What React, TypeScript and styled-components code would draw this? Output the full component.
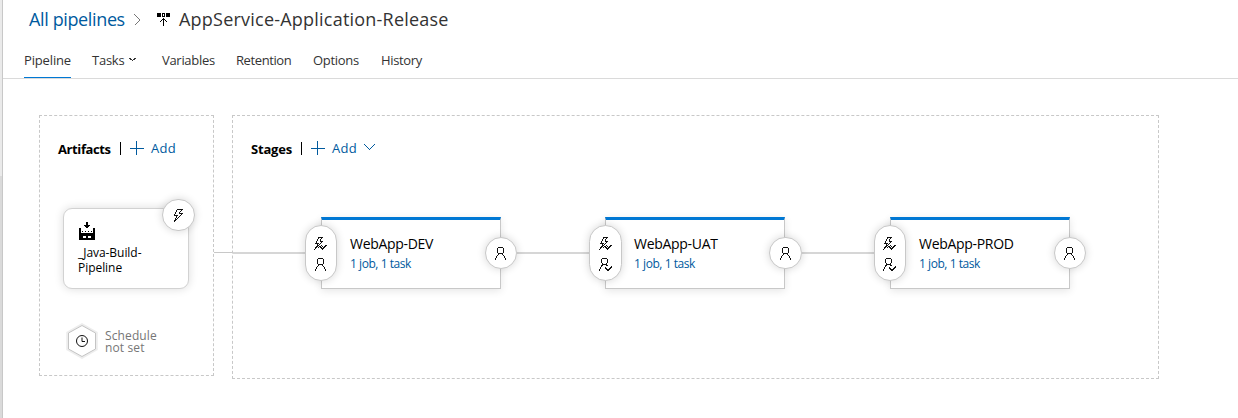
import React from "react";
import styled, { createGlobalStyle } from "styled-components";

const Global = createGlobalStyle`
  * { box-sizing: border-box; }
  body { margin: 0; background: #fff; font-family: "Open Sans", "Noto Sans", sans-serif; color: #333; }
  svg { display: block; flex: none; shape-rendering: crispEdges; }
`;

const Page = styled.div`
  display: flex;
  width: 1238px;
  height: 418px;
  overflow: hidden;
`;
const Rail = styled.div`
  flex: none;
  width: 3px;
  border-right: 1px solid #c8c8c8;
  background: linear-gradient(#eaeaea 176px, #dadada 176px);
`;
const Main = styled.main`
  flex: 1;
  display: flex;
  flex-direction: column;
`;
const Breadcrumb = styled.header`
  display: flex;
  align-items: center;
  height: 40px;
  padding-left: 26px;
`;
const Text = styled.span<{ $size: number; $line: number; $track?: number; $color?: string; $weight?: number }>`
  font-size: ${(p) => p.$size}px;
  line-height: ${(p) => p.$line}px;
  letter-spacing: ${(p) => p.$track ?? 0}px;
  color: ${(p) => p.$color ?? "#333"};
  font-weight: ${(p) => p.$weight ?? 400};
  white-space: pre-line;
`;
const CrumbLink = styled.div`
  width: 105px;
  margin-top: -2px;
  white-space: nowrap;
`;
const CrumbTitle = styled.div`
  margin-top: -2px;
  white-space: nowrap;
`;
const CrumbIcon = styled.div`
  margin: -1px 9px 0 16px;
`;
const Tabs = styled.nav`
  display: flex;
  gap: 21px;
  height: 39px;
  padding-left: 21px;
  border-bottom: 1px solid #dadada;
`;
const Tab = styled.div<{ $w: number; $active?: boolean }>`
  display: flex;
  align-items: center;
  gap: 5px;
  width: ${(p) => p.$w}px;
  padding-top: 2px;
  padding-bottom: ${(p) => (p.$active ? 0 : 1)}px;
  border-bottom: ${(p) => (p.$active ? "1px solid #0078d4" : "none")};
  white-space: nowrap;
`;
const Canvas = styled.div`
  display: flex;
  align-items: flex-start;
  padding: 36px 0 0 36px;
`;
const Panel = styled.section<{ $w: number; $h: number }>`
  width: ${(p) => p.$w}px;
  height: ${(p) => p.$h}px;
  border: 1px dashed #c8c8c8;
`;
const PanelHead = styled.div`
  display: flex;
  align-items: center;
  height: 64px;
  padding-left: 18px;
`;
const HeadTitle = styled.div<{ $w: number }>`
  width: ${(p) => p.$w}px;
`;
const Divider = styled.div`
  width: 1px;
  height: 13px;
  margin-right: 9px;
  background: #000;
`;
const AddButton = styled.div`
  display: flex;
  align-items: center;
  gap: 7px;
`;
const AddChevron = styled.svg`
  margin-top: -2px;
`;
const PanelLink = styled.div`
  width: 18px;
  height: 1px;
  margin-top: 137px;
  background: #c8c8c8;
`;
const ArtifactCard = styled.div`
  position: relative;
  width: 126px;
  height: 81px;
  margin: 28px 0 0 23px;
  padding: 13px 0 0 14px;
  border: 1px solid #d2d2d2;
  border-radius: 9px;
  background: #fff;
  box-shadow: 0 0 10px rgba(0, 0, 0, 0.14);
`;
const BuildIcon = styled.svg`
  margin-left: 1px;
`;
const ArtifactName = styled.div`
  display: flex;
  margin-top: 5px;
`;
const Bubble = styled.div<{ $h?: number; $w?: number }>`
  display: flex;
  flex-direction: column;
  align-items: center;
  justify-content: center;
  gap: 8px;
  width: ${(p) => p.$w ?? 32}px;
  height: ${(p) => p.$h ?? 32}px;
  padding-right: ${(p) => (p.$h && p.$w === 33 ? 0 : 1)}px;
  padding-top: ${(p) => (p.$h ? 2 : 0)}px;
  border: 1px solid #c8c8c8;
  border-radius: 17px;
  background: #fff;
  box-shadow: 0 0 8px rgba(0, 0, 0, 0.16);
`;
const TriggerBadge = styled(Bubble)`
  position: absolute;
  top: -10px;
  left: 98px;
  padding-right: 0;
`;
const Schedule = styled.div`
  display: flex;
  align-items: center;
  margin: 33px 0 0 25px;
  gap: 6px;
`;
const ScheduleLabel = styled.div`
  display: flex;
  padding-top: 1px;
`;
const StageRow = styled.div`
  display: flex;
  align-items: center;
  height: 72px;
  margin-top: 37px;
`;
const Connector = styled.div<{ $w: number }>`
  width: ${(p) => p.$w}px;
  height: 2px;
  background: #d6d6d6;
`;
const Stage = styled.div`
  position: relative;
  display: flex;
  align-items: center;
  height: 72px;
  z-index: 1;
`;
const StageCard = styled.div<{ $overlap: number }>`
  flex: none;
  width: 180px;
  height: 72px;
  margin: 0 -16px 0 -${(p) => p.$overlap}px;
  padding: 14px 0 0 28px;
  border: 1px solid #c8c8c8;
  border-top: 3px solid #0078d4;
  background: #fff;
  box-shadow: 0 2px 8px rgba(0, 0, 0, 0.1);
  display: flex;
  flex-direction: column;
  gap: 1px;
`;
const FrontBubble = styled(Bubble)`
  position: relative;
  flex: none;
  z-index: 1;
`;

const LINK = "#005a9e";

const Plus = () => (
  <svg width="14" height="14" viewBox="0 0 14 14" fill={LINK}>
    <path d="M6 0h1v14h-1zM0 7h14v1H0z" />
  </svg>
);

/* Icons drawn on a 13px grid; each row lists [first column, length] runs. */
type Run = [number, number];
const toPath = (rows: Run[][]) =>
  rows.map((runs, y) => runs.map(([x, n]) => `M${x} ${y}h${n}v1h-${n}z`).join("")).join("");

const GridIcon = ({ rows }: { rows: Run[][] }) => (
  <svg width="13" height="13" viewBox="0 0 13 13" fill="#111">
    <path d={toPath(rows)} />
  </svg>
);

const BOLT: Run[][] = [
  [[5, 6]],
  [[4, 1], [9, 1]],
  [[4, 1], [8, 1]],
  [[3, 1], [7, 1]],
  [[3, 1], [7, 4]],
  [[2, 1], [9, 1]],
  [[2, 4], [8, 1]],
  [[4, 1], [7, 1]],
  [[4, 1], [6, 1]],
  [[3, 1], [5, 1]],
  [[3, 2]],
  [[2, 2]],
  [[2, 1]],
];
const BOLT_CHECK: Run[][] = [
  [[4, 5]],
  [[4, 1], [7, 1]],
  [[3, 1], [6, 1]],
  [[3, 1], [6, 1]],
  [[2, 1], [6, 3]],
  [[2, 1], [7, 1]],
  [[1, 4], [6, 1]],
  [[3, 1], [5, 1]],
  [[3, 2], [7, 1], [11, 2]],
  [[2, 2], [5, 2], [8, 1], [10, 2]],
  [[1, 2], [4, 1], [6, 2], [9, 2]],
  [[1, 1], [7, 3]],
  [[0, 1], [8, 1]],
];
const PERSON: Run[][] = [
  [[4, 5]],
  [[3, 1], [9, 1]],
  [[3, 1], [9, 1]],
  [[3, 1], [9, 1]],
  [[3, 1], [9, 1]],
  [[3, 1], [9, 1]],
  [[4, 5]],
  [[4, 1], [8, 1]],
  [[3, 1], [9, 1]],
  [[2, 1], [10, 1]],
  [[2, 1], [10, 1]],
  [[1, 1], [11, 1]],
  [[1, 1], [11, 1]],
];
const PERSON_CHECK: Run[][] = [
  [[3, 5]],
  [[2, 1], [8, 1]],
  [[2, 1], [8, 1]],
  [[2, 1], [8, 1]],
  [[2, 1], [8, 1]],
  [[3, 1], [7, 1]],
  [[3, 5]],
  [[2, 2], [7, 2]],
  [[2, 1], [12, 1]],
  [[1, 1], [6, 1], [11, 2]],
  [[1, 1], [6, 2], [10, 2]],
  [[0, 1], [7, 4]],
  [[0, 1], [8, 2]],
];

const tabs: { name: string; w: number; track: number }[] = [
  { name: "Pipeline", w: 47, track: -0.15 },
  { name: "Tasks", w: 49, track: -0.25 },
  { name: "Variables", w: 53, track: -0.3 },
  { name: "Retention", w: 56, track: -0.4 },
  { name: "Options", w: 47, track: -0.3 },
  { name: "History", w: 41, track: -0.35 },
];
const stages = [
  { name: "WebApp-DEV", start: 32, end: 32, approved: false },
  { name: "WebApp-UAT", start: 33, end: 33, approved: true },
  { name: "WebApp-PROD", start: 32, end: 32, approved: true },
];

export default function App() {
  return (
    <Page>
      <Global />
      <Rail />
      <Main>
        <Breadcrumb>
          <CrumbLink>
            <Text $size={18} $line={24} $track={-0.37} $color={LINK}>All pipelines</Text>
          </CrumbLink>
          <svg width="7" height="12" viewBox="0 0 7 12" fill="none" stroke="#767676">
            <path d="M.5 .5L6 6L.5 11.500" />
          </svg>
          <CrumbIcon>
            <svg width="13" height="13" viewBox="0 0 13 13" fill="#000">
              <path d="M0 0h4v4H0zM9 0h4v4H9zM5 0h3v4H5zM6 1v2h1V1z" fillRule="evenodd" />
              <path d="M6 5h1v8H6zM5 6h3v1H5zM4 7h1v1H4zM8 7h1v1H8zM3 8h1v1H3zM9 8h1v1H9z" />
            </svg>
          </CrumbIcon>
          <CrumbTitle>
            <Text $size={18} $line={24} $track={0.22}>AppService-Application-Release</Text>
          </CrumbTitle>
        </Breadcrumb>
        <Tabs>
          {tabs.map((t, i) => (
            <Tab key={t.name} $w={t.w} $active={i === 0}>
              <Text $size={13} $line={18} $track={t.track}>{t.name}</Text>
              {t.name === "Tasks" && (
                <svg width="7" height="3" viewBox="0 0 7 3" fill="#333">
                  <path d="M0 0h2v1H0zM5 0h2v1H5zM1 1h2v1H1zM4 1h2v1H4zM3 2h1v1H3z" />
                </svg>
              )}
            </Tab>
          ))}
        </Tabs>
        <Canvas>
          <Panel $w={175} $h={261}>
            <PanelHead>
              <HeadTitle $w={62}>
                <Text $size={13} $line={18} $track={-0.4} $color="#000" $weight={700}>Artifacts</Text>
              </HeadTitle>
              <Divider />
              <AddButton>
                <Plus />
                <Text $size={13} $line={18} $track={0.3} $color={LINK}>Add</Text>
              </AddButton>
            </PanelHead>
            <ArtifactCard>
              <BuildIcon width="16" height="18" viewBox="0 0 16 18" fill="#000">
                <path d="M7 0h2v4H7zM5 3h6v1H5zM6 4h4v1H6zM7 5h2v1H7z" />
                <path d="M0 6h2v5h12V6h2v12H0zM4 14v2h3v-2zM9 14v2h3v-2z" fillRule="evenodd" />
                <path d="M3 9h1v1H3zM6 9h1v1H6zM9 9h1v1H9zM12 9h1v1H12z" />
              </BuildIcon>
              <ArtifactName>
                <Text $size={12} $line={15} $track={-0.05} $color="#000">{"_Java-Build-\nPipeline"}</Text>
              </ArtifactName>
              <TriggerBadge $w={33}><GridIcon rows={BOLT} /></TriggerBadge>
            </ArtifactCard>
            <Schedule>
              <svg width="34" height="38" viewBox="0 0 34 38" fill="none" style={{ shapeRendering: "auto" }}>
                <path d="M17 3L31 11V27L17 35L3 27V11Z" stroke="#ededed" strokeWidth="3.500" />
                <path d="M17 3.500L30.500 11V27L17 34.500L3.500 27V11Z" fill="#fff" stroke="#c4c4c4" />
                <circle cx="17" cy="19" r="5.500" stroke="#111" />
                <path d="M17 15.500V19.500H20" stroke="#111" />
              </svg>
              <ScheduleLabel>
                <Text $size={12} $line={12} $track={0.12} $color="#767676">{"Schedule\nnot set"}</Text>
              </ScheduleLabel>
            </Schedule>
          </Panel>
          <PanelLink />
          <Panel $w={927} $h={264}>
            <PanelHead>
              <HeadTitle $w={50}>
                <Text $size={13} $line={18} $track={-0.2} $color="#000" $weight={700}>Stages</Text>
              </HeadTitle>
              <Divider />
              <AddButton>
                <Plus />
                <Text $size={13} $line={18} $track={0.3} $color={LINK}>Add</Text>
                <AddChevron width="11" height="6" viewBox="0 0 11 6" fill={LINK}>
                  <path d="M0 0h1v1H0zM1 1h1v1H1zM2 2h1v1H2zM3 3h1v1H3zM4 4h1v1H4zM5 5h1v1H5zM6 4h1v1H6zM7 3h1v1H7zM8 2h1v1H8zM9 1h1v1H9zM10 0h1v1H10z" />
                </AddChevron>
              </AddButton>
            </PanelHead>
            <StageRow>
              {stages.map((s) => (
                <React.Fragment key={s.name}>
                  <Connector $w={72} />
                  <Stage>
                    <FrontBubble $h={56} $w={s.start}>
                      <GridIcon rows={BOLT_CHECK} />
                      <GridIcon rows={s.approved ? PERSON_CHECK : PERSON} />
                    </FrontBubble>
                    <StageCard $overlap={s.start - 16}>
                      <Text $size={14} $line={19} $track={-0.3} $color="#000">{s.name}</Text>
                      <Text $size={12} $line={19} $track={-0.45} $color={LINK}>1 job, 1 task</Text>
                    </StageCard>
                    <FrontBubble $w={s.end}><GridIcon rows={PERSON} /></FrontBubble>
                  </Stage>
                </React.Fragment>
              ))}
            </StageRow>
          </Panel>
        </Canvas>
      </Main>
    </Page>
  );
}
